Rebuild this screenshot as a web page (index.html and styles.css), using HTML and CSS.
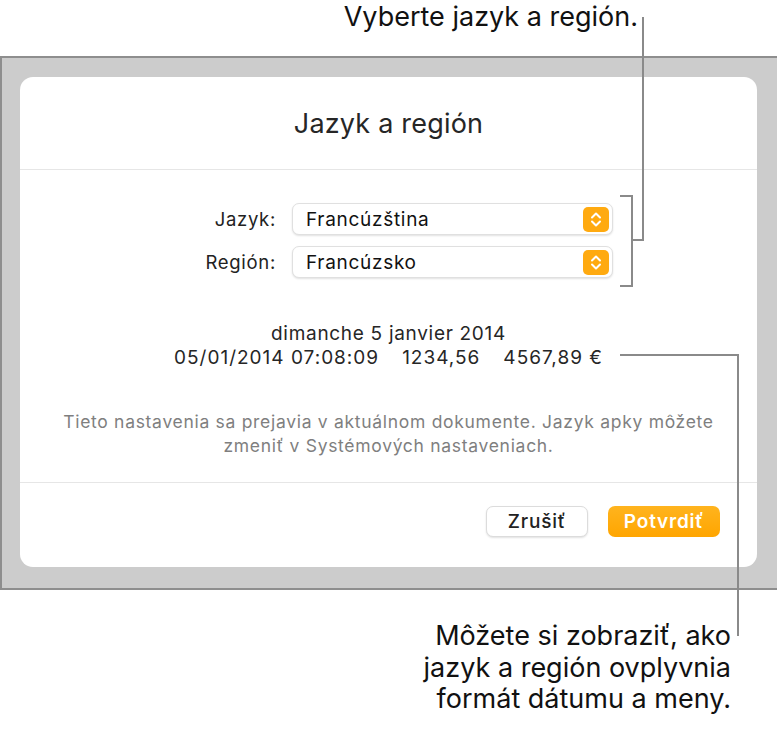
FILE: index.html
```html
<!DOCTYPE html>
<html lang="sk">
<head>
<meta charset="utf-8">
<title>Jazyk a región</title>
<link rel="stylesheet" href="styles.css">
</head>
<body>
<div class="page">
  <div class="callout-top">Vyberte jazyk a región.</div>
  <div class="frame">
    <div class="dialog">
      <div class="title">Jazyk a región</div>
      <div class="body">
        <div class="form">
          <div class="label">Jazyk:</div>
          <div class="popup"><span>Francúzština</span>
            <svg class="chev" width="26" height="25" viewBox="0 0 26 25"><rect width="26" height="25" rx="5" fill="#ffaa10"/><path d="M9 10.5 L13 6.5 L17 10.5 M9 14.5 L13 18.5 L17 14.5" fill="none" stroke="#fff" stroke-width="2" stroke-linecap="round" stroke-linejoin="round"/></svg>
          </div>
          <div class="label">Región:</div>
          <div class="popup"><span>Francúzsko</span>
            <svg class="chev" width="26" height="25" viewBox="0 0 26 25"><rect width="26" height="25" rx="5" fill="#ffaa10"/><path d="M9 10.5 L13 6.5 L17 10.5 M9 14.5 L13 18.5 L17 14.5" fill="none" stroke="#fff" stroke-width="2" stroke-linecap="round" stroke-linejoin="round"/></svg>
          </div>
        </div>
        <div class="sample">
          <div class="sample-line">dimanche 5 janvier 2014</div>
          <div class="sample-line wide"><span>05/01/2014 07:08:09</span><span>1234,56</span><span>4567,89 €</span></div>
        </div>
        <p class="note">Tieto nastavenia sa prejavia v aktuálnom dokumente. Jazyk apky môžete<br>zmeniť v Systémových nastaveniach.</p>
      </div>
      <div class="footer">
        <button class="btn cancel">Zrušiť</button>
        <button class="btn ok">Potvrdiť</button>
      </div>
    </div>
  </div>
  <div class="callout-bottom">Môžete si zobraziť, ako<br>jazyk a región ovplyvnia<br>formát dátumu a meny.</div>

  <div class="line l1v"></div>
  <div class="line l1h"></div>
  <div class="bracket"></div>
  <div class="line l2h"></div>
  <div class="line l2v"></div>
</div>
</body>
</html>
```

FILE: styles.css
```css
* { box-sizing: border-box; }
html, body { margin: 0; padding: 0; background: #fff; }
body { font-family: "Inter", "Noto Sans", sans-serif; color: #1f1f1f; }

.page { position: relative; width: 777px; height: 729px; overflow: hidden; }

.callout-top {
  height: 56px;
  padding-right: 139px;
  text-align: right;
  font-size: 27px;
  line-height: 34px;
  color: #111;
}

.frame {
  height: 534px;
  background: #cccccc;
  border-top: 2px solid #8e8e8e;
  border-left: 2px solid #8e8e8e;
  border-bottom: 2px solid #8e8e8e;
  padding: 19px 20px 21px 18px;
}

.dialog {
  height: 490px;
  background: #fff;
  border-radius: 13px;
  display: flex;
  flex-direction: column;
}

.title {
  height: 93px;
  display: flex;
  align-items: center;
  justify-content: center;
  font-size: 27px;
  letter-spacing: 0.2px;
  color: #262626;
  border-bottom: 1px solid #e6e6e6;
  padding-top: 1px;
}

.body {
  height: 313px;
  padding-top: 33px;
  border-bottom: 1px solid #e6e6e6;
}

.form {
  display: grid;
  grid-template-columns: 256px 321px;
  column-gap: 16px;
  row-gap: 11px;
  align-items: center;
}

.label {
  text-align: right;
  font-size: 18.5px;
  letter-spacing: 0.7px;
  color: #222;
}

.popup {
  height: 32px;
  border-radius: 7px;
  background: #fff;
  border: 1px solid #e0e0e0;
  box-shadow: 0 1px 2px rgba(0,0,0,0.12);
  display: flex;
  align-items: center;
  justify-content: space-between;
  padding: 0 3px 0 13px;
  font-size: 19px;
  letter-spacing: 0.7px;
  color: #111;
}

.chev { display: block; }

.sample {
  margin-top: 44px;
  font-size: 19px;
  letter-spacing: 0.7px;
  line-height: 24px;
  color: #262626;
}

.sample-line {
  display: flex;
  justify-content: center;
  gap: 23px;
}

.sample-line.wide { letter-spacing: 1px; }

.note {
  margin: 40px 0 0;
  text-align: center;
  font-size: 17.5px;
  letter-spacing: 0.7px;
  line-height: 24px;
  color: #7f7f7f;
}

.footer {
  flex: 1;
  display: flex;
  justify-content: flex-end;
  align-items: flex-start;
  gap: 20px;
  padding: 23px 37px 0 0;
}

.btn {
  height: 31px;
  border-radius: 7px;
  font-family: "Inter", "Noto Sans", sans-serif;
  font-size: 19px;
  letter-spacing: 0.8px;
  font-weight: 500;
  padding: 0;
}

.cancel {
  width: 102px;
  background: #fff;
  color: #222;
  border: 1px solid #dcdcdc;
  box-shadow: 0 1px 2px rgba(0,0,0,0.12);
}

.ok {
  width: 112px;
  border: none;
  color: #fff;
  background: linear-gradient(#ffb41e, #ffa500);
  font-weight: 600;
}

.callout-bottom {
  padding: 30px 46px 0 0;
  text-align: right;
  font-size: 27px;
  line-height: 31.5px;
  color: #111;
}

.line { position: absolute; background: #8a8a8a; }
.l1v { left: 642px; top: 17px; width: 2px; height: 224px; }
.l1h { left: 631px; top: 239px; width: 13px; height: 2px; }
.bracket {
  position: absolute;
  left: 620px; top: 195px;
  width: 13px; height: 92px;
  border: 2px solid #8a8a8a;
  border-left: none;
}
.l2h { left: 620px; top: 354px; width: 119px; height: 2px; }
.l2v { left: 737px; top: 354px; width: 2px; height: 282px; }
```
